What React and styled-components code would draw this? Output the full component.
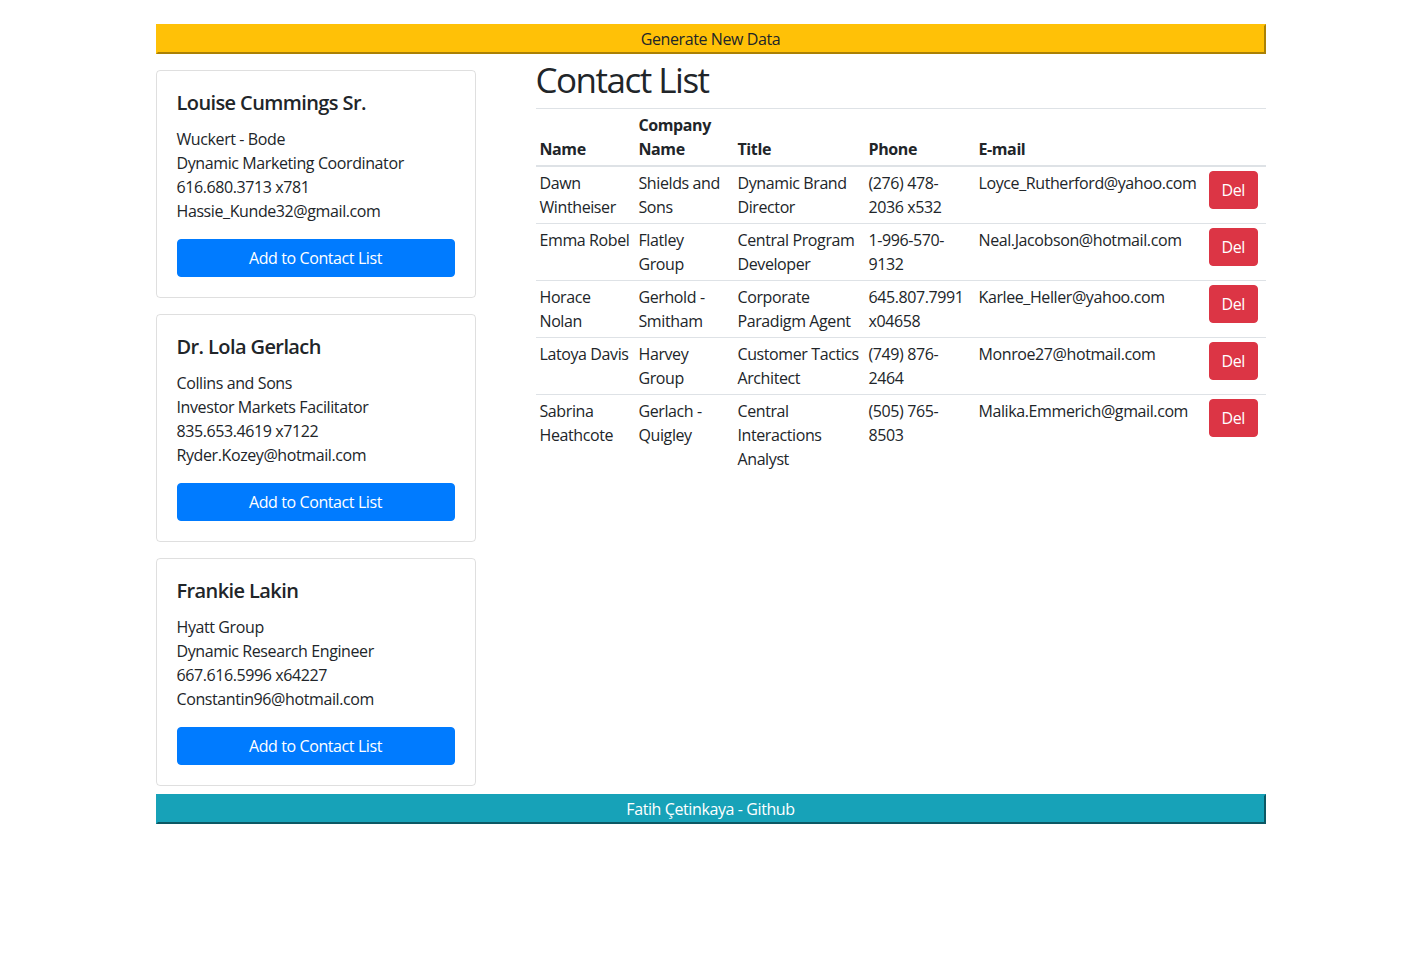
import React from "react";
import styled, { createGlobalStyle } from "styled-components";

const GlobalStyle = createGlobalStyle`
  body {
    margin: 0;
    font-family: "Open Sans", "Noto Sans", sans-serif;
    font-size: 16px;
    line-height: 1.5;
    letter-spacing: -0.4px;
    color: #212529;
    background: #fff;
  }
  * { box-sizing: border-box; }
`;

const Container = styled.div`
  width: 1110px;
  margin: 0 auto;
  padding-top: 24px;
`;

const Bar = styled.button`
  display: block;
  width: 100%;
  padding: 1px 6px;
  font: inherit;
  letter-spacing: inherit;
  line-height: 24px;
  text-align: center;
  cursor: pointer;
  color: ${(props) => props.textColor};
  background-color: ${(props) => props.bg};
  border: 2px outset ${(props) => props.bg};
  margin-top: ${(props) => props.top || "0"};
`;

const Row = styled.div`
  display: flex;
  align-items: flex-start;
  gap: 60px;
`;

const Suggestions = styled.div`
  width: 320px;
  flex-shrink: 0;
  padding-top: 16px;
  display: flex;
  flex-direction: column;
  gap: 16px;
`;

const Card = styled.div`
  border: 1px solid rgba(0, 0, 0, 0.125);
  border-radius: 4px;
  padding: 20px;
`;

const CardTitle = styled.h5`
  margin: 0 0 12px 0;
  font-size: 20px;
  font-weight: 600;
  line-height: 24px;
  letter-spacing: -0.6px;
`;

const CardText = styled.p`
  margin: 0 0 16px 0;
`;

const Line = styled.div``;

const Button = styled.button`
  display: block;
  width: ${(props) => (props.block ? "100%" : "auto")};
  padding: 6px 12px;
  font: inherit;
  letter-spacing: inherit;
  line-height: 24px;
  color: #fff;
  background-color: ${(props) => props.color};
  border: 1px solid ${(props) => props.color};
  border-radius: 4px;
  cursor: pointer;
`;

const ListSection = styled.div`
  flex: 1;
  padding-top: 2px;
`;

const Heading = styled.h1`
  margin: 0;
  font-size: 35px;
  font-weight: 500;
  line-height: 48px;
  letter-spacing: -1.5px;
`;

const Rule = styled.hr`
  margin: 4px 0 0 0;
  border: 0;
  border-top: 1px solid #dee2e6;
`;

const Table = styled.table`
  width: 100%;
  border-collapse: collapse;
  table-layout: fixed;
`;

const Th = styled.th`
  text-align: left;
  vertical-align: bottom;
  padding: 4px;
  border-bottom: 2px solid #dee2e6;
  font-weight: 700;
`;

const Td = styled.td`
  vertical-align: top;
  padding: 4px;
  border-top: 1px solid #dee2e6;
`;

const suggestions = [
  {
    name: "Louise Cummings Sr.",
    company: "Wuckert - Bode",
    title: "Dynamic Marketing Coordinator",
    phone: "616.680.3713 x781",
    email: "Hassie_Kunde32@gmail.com",
  },
  {
    name: "Dr. Lola Gerlach",
    company: "Collins and Sons",
    title: "Investor Markets Facilitator",
    phone: "835.653.4619 x7122",
    email: "Ryder.Kozey@hotmail.com",
  },
  {
    name: "Frankie Lakin",
    company: "Hyatt Group",
    title: "Dynamic Research Engineer",
    phone: "667.616.5996 x64227",
    email: "Constantin96@hotmail.com",
  },
];

const contacts = [
  {
    name: "Dawn Wintheiser",
    company: "Shields and Sons",
    title: "Dynamic Brand Director",
    phone: "(276) 478-2036 x532",
    email: "Loyce_Rutherford@yahoo.com",
  },
  {
    name: "Emma Robel",
    company: "Flatley Group",
    title: "Central Program Developer",
    phone: "1-996-570-9132",
    email: "Neal.Jacobson@hotmail.com",
  },
  {
    name: "Horace Nolan",
    company: "Gerhold - Smitham",
    title: "Corporate Paradigm Agent",
    phone: "645.807.7991 x04658",
    email: "Karlee_Heller@yahoo.com",
  },
  {
    name: "Latoya Davis",
    company: "Harvey Group",
    title: "Customer Tactics Architect",
    phone: "(749) 876-2464",
    email: "Monroe27@hotmail.com",
  },
  {
    name: "Sabrina Heathcote",
    company: "Gerlach - Quigley",
    title: "Central Interactions Analyst",
    phone: "(505) 765-8503",
    email: "Malika.Emmerich@gmail.com",
  },
];

const columns = [99, 99, 131, 110, 230, 61];

export default function App() {
  return (
    <>
      <GlobalStyle />
      <Container>
        <Bar bg="#ffc107" textColor="#212529">
          Generate New Data
        </Bar>
        <Row>
          <Suggestions>
            {suggestions.map((s) => (
              <Card key={s.email}>
                <CardTitle>{s.name}</CardTitle>
                <CardText>
                  <Line>{s.company}</Line>
                  <Line>{s.title}</Line>
                  <Line>{s.phone}</Line>
                  <Line>{s.email}</Line>
                </CardText>
                <Button block color="#007bff">
                  Add to Contact List
                </Button>
              </Card>
            ))}
          </Suggestions>
          <ListSection>
            <Heading>Contact List</Heading>
            <Rule />
            <Table>
              <colgroup>
                {columns.map((w, i) => (
                  <col key={i} style={{ width: w }} />
                ))}
              </colgroup>
              <thead>
                <tr>
                  <Th>Name</Th>
                  <Th>Company Name</Th>
                  <Th>Title</Th>
                  <Th>Phone</Th>
                  <Th>E-mail</Th>
                  <Th />
                </tr>
              </thead>
              <tbody>
                {contacts.map((c) => (
                  <tr key={c.email}>
                    <Td>{c.name}</Td>
                    <Td>{c.company}</Td>
                    <Td>{c.title}</Td>
                    <Td>{c.phone}</Td>
                    <Td>{c.email}</Td>
                    <Td>
                      <Button color="#dc3545">Del</Button>
                    </Td>
                  </tr>
                ))}
              </tbody>
            </Table>
          </ListSection>
        </Row>
        <Bar bg="#17a2b8" textColor="#fff" top="8px">
          Fatih Çetinkaya - Github
        </Bar>
      </Container>
    </>
  );
}
